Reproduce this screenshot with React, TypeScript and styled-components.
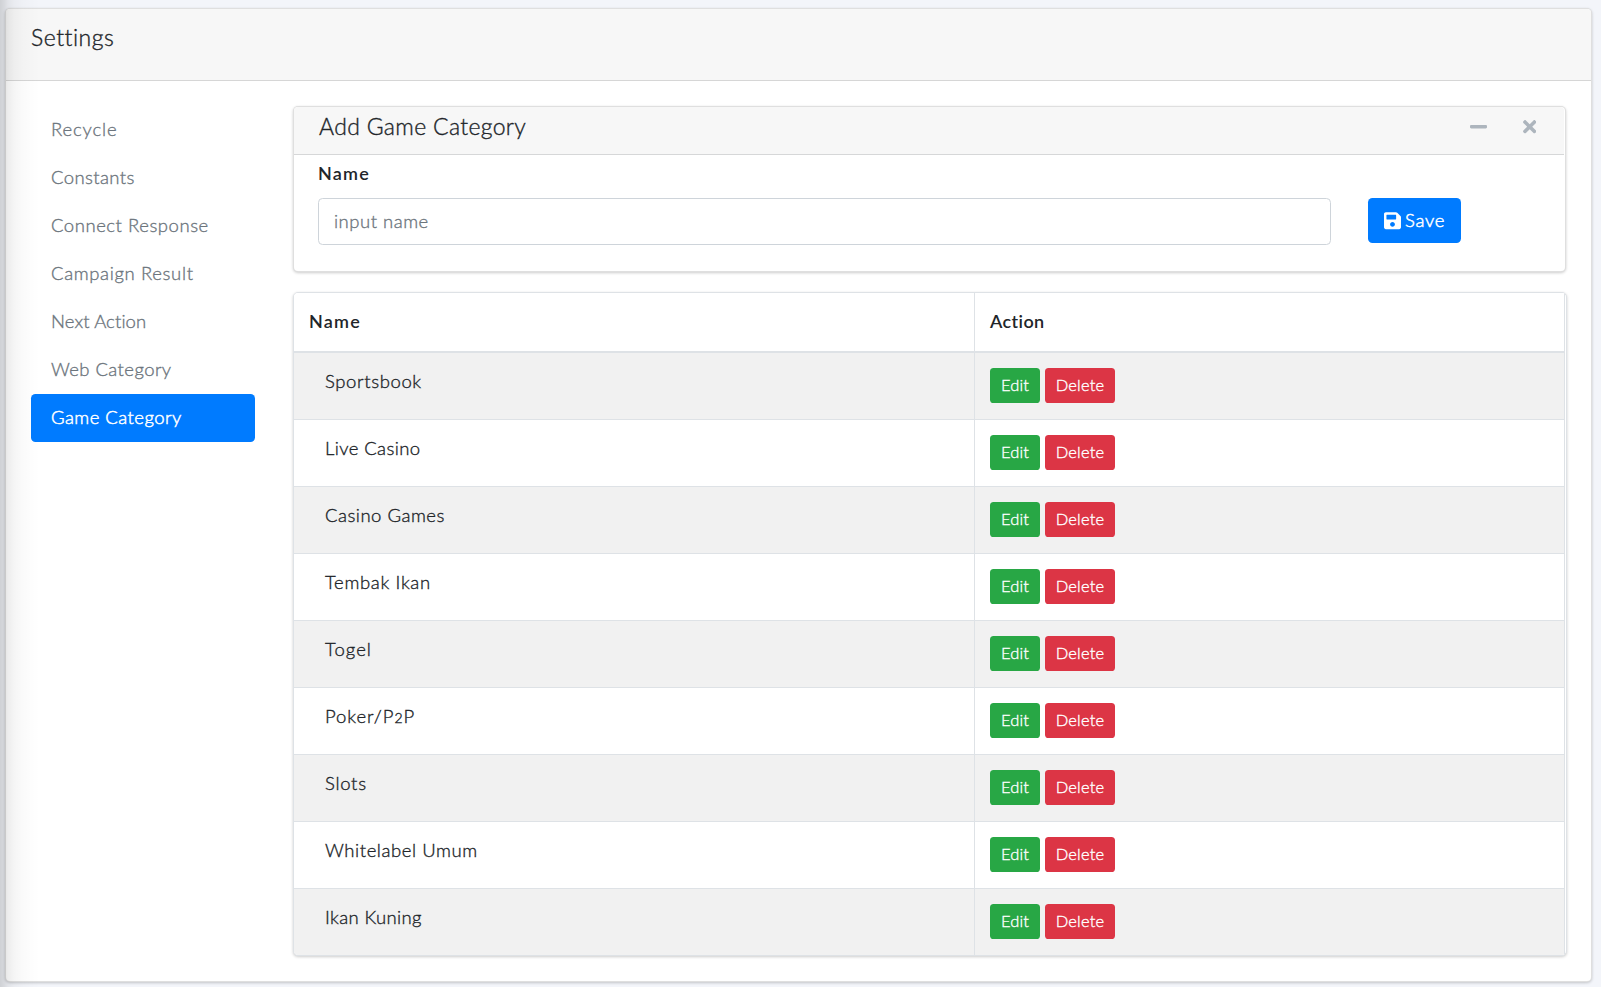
import React from 'react';
import styled, { createGlobalStyle } from 'styled-components';
import { FaMinus, FaSave, FaTimes } from 'react-icons/fa';

const GlobalStyle = createGlobalStyle`
  *, *::before, *::after { box-sizing: border-box; }
  body {
    margin: 0;
    background: #fff;
    color: #212529;
    font: 300 18.5px/27px Lato, "Open Sans", sans-serif;
    -webkit-text-stroke: 0.35px;
  }
  button, input { font: inherit; }
`;

const Page = styled.div`
  position: relative;
  width: 1601px;
  height: 987px;
  padding: 8px 9px 5px 5px;
  background: #f3f5fa;
  overflow: hidden;
`;

const SidebarShadow = styled.div`
  position: absolute;
  inset: 0 auto 0 0;
  width: 40px;
  pointer-events: none;
  background: linear-gradient(
    to right,
    rgba(0, 0, 0, 0.15) 0,
    rgba(0, 0, 0, 0.105) 5px,
    rgba(0, 0, 0, 0.07) 8px,
    rgba(0, 0, 0, 0.04) 14px,
    rgba(0, 0, 0, 0.018) 22px,
    rgba(0, 0, 0, 0.006) 32px,
    transparent 40px
  );
`;

const Card = styled.section`
  display: flex;
  flex-direction: column;
  background: #fff;
  border: 1px solid rgba(0, 0, 0, 0.125);
  border-radius: 5px;
  box-shadow: 0 1px 3px rgba(0, 0, 0, 0.2);
`;

const MainCard = styled(Card)`
  width: 1587px;
  height: 974px;
`;

const MainHeader = styled.header`
  height: 72px;
  padding: 15px 25px;
  background: #f7f7f7;
  border-bottom: 1px solid #d6d6d6;
  border-radius: 4px 4px 0 0;
  flex: 0 0 72px;
`;

const Label = styled.span<{ $track: number }>`
  letter-spacing: ${p => p.$track}px;
  white-space: nowrap;
`;

const OldstyleDigit = styled.span`
  font-size: 14px;
  -webkit-text-stroke-width: 0.4px;
`;

const Title = styled.h4`
  margin: 0;
  font-size: 23px;
  font-weight: 300;
  line-height: 27px;
`;

const MainBody = styled.div`
  display: flex;
  gap: 38px;
  padding: 25px 24px 25px 25px;
`;

const Nav = styled.nav`
  display: flex;
  flex-direction: column;
  flex: 0 0 224px;
`;

const NavItem = styled.a<{ $active?: boolean }>`
  height: 48px;
  padding: 10px 20px 0;
  line-height: 27px;
  border-radius: 4.5px;
  color: ${p => (p.$active ? '#fff' : '#6c757d')};
  background: ${p => (p.$active ? '#007bff' : 'transparent')};
  -webkit-text-stroke-width: ${p => (p.$active ? 0.5 : 0.35)}px;
`;

const Content = styled.main`
  display: flex;
  flex-direction: column;
  gap: 20px;
  flex: 0 0 1274px;
`;

const FormCard = styled(Card)`
  width: 1273px;
  height: 166px;
`;

const FormHeader = styled.header`
  display: flex;
  justify-content: space-between;
  height: 48px;
  margin-right: 1px;
  padding: 6px 28px 0 25px;
  background: #f7f7f7;
  border-bottom: 1px solid #d6d7d8;
  border-radius: 4px 4px 0 0;
`;

const Tools = styled.div`
  display: flex;
  gap: 36px;
  height: 28px;
  align-items: center;
  color: #adb5bd;
`;

const MinusIcon = styled(FaMinus)`
  width: 17px;
  height: 19.4px;
`;

const CloseIcon = styled(FaTimes)`
  width: 13.4px;
  height: 19.4px;
`;

const SaveIcon = styled(FaSave)`
  width: 17px;
  height: 19.4px;
`;

const FormBody = styled.div`
  display: flex;
  gap: 37px;
  padding: 5px 24px 0;
`;

const Field = styled.label`
  display: flex;
  flex-direction: column;
  gap: 11px;
  width: 1013px;
  font-size: 18px;
  font-weight: 600;
  -webkit-text-stroke-width: 0;
`;

const Input = styled.input`
  height: 47px;
  padding: 0 15px 2px;
  border: 1px solid #ced4da;
  border-radius: 4.5px;
  font-size: 18.5px;
  font-weight: 300;
  letter-spacing: 0.5px;
  outline: none;
  -webkit-text-stroke-width: 0.35px;
  &::placeholder {
    color: #6c757d;
    opacity: 1;
  }
`;

const SaveButton = styled.button`
  display: flex;
  align-items: center;
  gap: 4px;
  width: 93px;
  height: 45px;
  margin-top: 38px;
  padding: 0 0 0 16px;
  border: 0;
  border-radius: 4.5px;
  color: #fff;
  background: #007bff;
  -webkit-text-stroke-width: 0.5px;
`;

const TableCard = styled(Card)`
  height: 664px;
  padding-right: 1px;
  border-color: #dee2e6;
  overflow: hidden;
`;

const Row = styled.div<{ $striped?: boolean }>`
  display: grid;
  grid-template-columns: 681px 1fr;
  flex: 0 0 67px;
  border-right: 1px solid #dee2e6;
  border-bottom: 1px solid #dee2e6;
  background: ${p => (p.$striped ? '#f1f1f1' : '#fff')};
  &:last-child {
    border-bottom: 0;
  }
`;

const HeadRow = styled(Row)`
  flex-basis: 60px;
  border-bottom-width: 2px;
  font-size: 18px;
  font-weight: 600;
  -webkit-text-stroke-width: 0;
`;

const HeadCell = styled.div`
  padding: 15px 15px 0;
  &:first-child {
    border-right: 1px solid #dee2e6;
  }
`;

const NameCell = styled.div`
  padding: 14px 31px 0;
  line-height: 29px;
  border-right: 1px solid #dee2e6;
`;

const ActionCell = styled.div`
  display: flex;
  gap: 5px;
  padding: 15px 15px 0;
`;

const ActionButton = styled.button<{ $danger?: boolean }>`
  width: ${p => (p.$danger ? 70 : 50)}px;
  height: 35px;
  padding: 0;
  border: 0;
  border-radius: 3.6px;
  color: #fff;
  background: ${p => (p.$danger ? '#dc3545' : '#28a745')};
  font-size: 16.5px;
  line-height: 35px;
  -webkit-text-stroke-width: 0.35px;
`;

const navItems: [string, number][] = [
  ['Recycle', 0.85],
  ['Constants', 0.38],
  ['Connect Response', 0.54],
  ['Campaign Result', 0.64],
  ['Next Action', 0.1],
  ['Web Category', 0.42],
  ['Game Category', 0.45],
];

const categories: [string, number][] = [
  ['Sportsbook', 0.62],
  ['Live Casino', 0.4],
  ['Casino Games', 0.5],
  ['Tembak Ikan', 0.66],
  ['Togel', 1.05],
  ['Poker/P2P', 0.95],
  ['Slots', 0.72],
  ['Whitelabel Umum', 0.57],
  ['Ikan Kuning', 0.35],
];

const withOldstyleDigits = (text: string) =>
  text.split(/(\d)/).map((part, i) =>
    /^\d$/.test(part) ? <OldstyleDigit key={i}>{part}</OldstyleDigit> : part,
  );

export default function App() {
  return (
    <Page>
      <GlobalStyle />
      <MainCard>
        <MainHeader>
          <Title><Label $track={0.52}>Settings</Label></Title>
        </MainHeader>
        <MainBody>
          <Nav>
            {navItems.map(([name, track]) => (
              <NavItem key={name} $active={name === 'Game Category'}>
                <Label $track={track}>{name}</Label>
              </NavItem>
            ))}
          </Nav>
          <Content>
            <FormCard>
              <FormHeader>
                <Title><Label $track={0.33}>Add Game Category</Label></Title>
                <Tools>
                  <MinusIcon />
                  <CloseIcon />
                </Tools>
              </FormHeader>
              <FormBody>
                <Field>
                  <Label $track={1.2}>Name</Label>
                  <Input placeholder="input name" />
                </Field>
                <SaveButton>
                  <SaveIcon />
                  <Label $track={0.7}>Save</Label>
                </SaveButton>
              </FormBody>
            </FormCard>
            <TableCard>
              <HeadRow>
                <HeadCell><Label $track={1.2}>Name</Label></HeadCell>
                <HeadCell><Label $track={0.4}>Action</Label></HeadCell>
              </HeadRow>
              {categories.map(([name, track], i) => (
                <Row key={name} $striped={i % 2 === 0}>
                  <NameCell><Label $track={track}>{withOldstyleDigits(name)}</Label></NameCell>
                  <ActionCell>
                    <ActionButton><Label $track={0.1}>Edit</Label></ActionButton>
                    <ActionButton $danger><Label $track={0.2}>Delete</Label></ActionButton>
                  </ActionCell>
                </Row>
              ))}
            </TableCard>
          </Content>
        </MainBody>
      </MainCard>
      <SidebarShadow />
    </Page>
  );
}
